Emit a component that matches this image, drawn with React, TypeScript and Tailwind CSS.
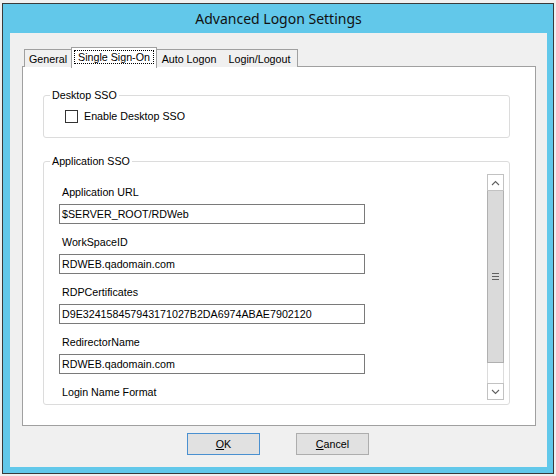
import React from "react";

function Chevron({ up }: { up: boolean }) {
  return (
    <svg width="9" height="6" viewBox="0 0 9 6">
      <path
        d={up ? "M1 5 L4.5 1.5 L8 5" : "M1 1 L4.5 4.5 L8 1"}
        fill="none"
        stroke="#606060"
        strokeWidth="1.1"
      />
    </svg>
  );
}

function Field({ label, value }: { label: string; value: string }) {
  return (
    <div className="flex flex-col">
      <div className="h-[13px] leading-[13px] pl-[3px] mt-[12px] mb-[5px] whitespace-nowrap">{label}</div>
      <div className="w-[306px] h-[20px] border border-[#7a7a7a] bg-white pl-[2px] flex items-center leading-[13px] whitespace-nowrap overflow-hidden">
        {value}
      </div>
    </div>
  );
}

export default function App() {
  return (
    <div className="w-[556px] h-[476px] bg-[#f0f0f0] pl-[2px] pt-[3px] overflow-hidden text-[10.7px] text-black font-['Liberation_Sans',Arial,sans-serif]">
      <div className="w-[552px] h-[471px] border border-[#3a3a3a] bg-[#62c8ea] flex flex-col pl-[7px] pr-[6px] pb-[6px]">
        <div className="h-[29px] flex items-center justify-center text-[14px] text-[#111] font-['Noto_Sans',sans-serif] pb-[1px]">
          Advanced Logon Settings
        </div>
        <div className="flex-1 bg-[#f0f0f0] flex flex-col">
          {/* tab strip */}
          <div className="h-[20px] mt-[14px] ml-[14px] flex items-end relative z-10 -mb-px">
            <div className="w-[48px] h-[18px] border-l border-t border-r border-[#a0a0a0] bg-[#f0f0f0] flex items-center justify-center leading-[13px] pt-[1px]">
              General
            </div>
            <div className="w-[86px] h-[21px] -ml-px -mb-px relative z-10 border-l border-t border-r border-[#a0a0a0] bg-white flex items-start justify-center pt-[2px]">
              <div className="w-[80px] h-[14px] border border-dotted border-black flex items-center justify-center leading-[13px]">
                Single Sign-On
              </div>
            </div>
            <div className="w-[67px] h-[18px] -ml-px border-t border-r border-[#a0a0a0] bg-[#f0f0f0] flex items-center justify-center leading-[13px] pt-[1px]">
              Auto Logon
            </div>
            <div className="w-[76px] h-[18px] -ml-px border-t border-r border-[#a0a0a0] bg-[#f0f0f0] flex items-center justify-center leading-[13px] pt-[1px]">
              Login/Logout
            </div>
          </div>
          {/* tab page */}
          <div className="ml-[12px] w-[514px] h-[360px] border border-[#a0a0a0] bg-white pt-[21px] pl-[20px] flex flex-col">
            <fieldset className="w-[467px] border border-[#dcdcdc] rounded-[3px] pb-[14px]">
              <legend className="ml-[6px] px-[2px] leading-[14px] whitespace-nowrap">Desktop SSO</legend>
              <div className="pt-[7px] pl-[21px] flex items-center">
                <div className="w-[13px] h-[13px] border border-[#333333] bg-white" />
                <span className="ml-[6px] leading-[13px] pt-[1px]">Enable Desktop SSO</span>
              </div>
            </fieldset>
            <fieldset className="mt-[16px] w-[467px] border border-[#dcdcdc] rounded-[3px] pb-[4px]">
              <legend className="ml-[6px] px-[2px] leading-[14px] whitespace-nowrap">Application SSO</legend>
              <div className="mt-[6px] ml-[3px] mr-[5px] h-[226px] flex">
                <div className="flex-1 overflow-hidden pl-[12px] flex flex-col">
                  <Field label="Application URL" value="$SERVER_ROOT/RDWeb" />
                  <Field label="WorkSpaceID" value="RDWEB.qadomain.com" />
                  <Field label="RDPCertificates" value="D9E324158457943171027B2DA6974ABAE7902120" />
                  <Field label="RedirectorName" value="RDWEB.qadomain.com" />
                  <div className="h-[13px] leading-[13px] pl-[3px] mt-[12px] whitespace-nowrap">Login Name Format</div>
                </div>
                <div className="w-[17px] h-[226px] flex flex-col bg-white">
                  <div className="h-[17px] border border-[#c2c2c2] bg-white flex items-center justify-center">
                    <Chevron up={true} />
                  </div>
                  <div className="h-[172px] border-x border-b border-[#b0b0b0] bg-[#dadada] flex items-center justify-center">
                    <div className="flex flex-col gap-[2px] w-[7px]">
                      <div className="h-px bg-[#606060]" />
                      <div className="h-px bg-[#606060]" />
                      <div className="h-px bg-[#606060]" />
                    </div>
                  </div>
                  <div className="h-[20px] border-x border-[#dcdcdc] bg-white" />
                  <div className="h-[17px] border border-[#c2c2c2] bg-white flex items-center justify-center">
                    <Chevron up={false} />
                  </div>
                </div>
              </div>
            </fieldset>
          </div>
          {/* buttons */}
          <div className="mt-[7px] pl-[177px] flex gap-[36px]">
            <div className="w-[73px] h-[22px] border border-[#4a90d0] bg-[#e1e1e1] flex items-center justify-center leading-[13px]">
              <span><span className="underline">O</span>K</span>
            </div>
            <div className="w-[73px] h-[22px] border border-[#adadad] bg-[#e1e1e1] flex items-center justify-center leading-[13px]">
              <span><span className="underline">C</span>ancel</span>
            </div>
          </div>
        </div>
      </div>
    </div>
  );
}
